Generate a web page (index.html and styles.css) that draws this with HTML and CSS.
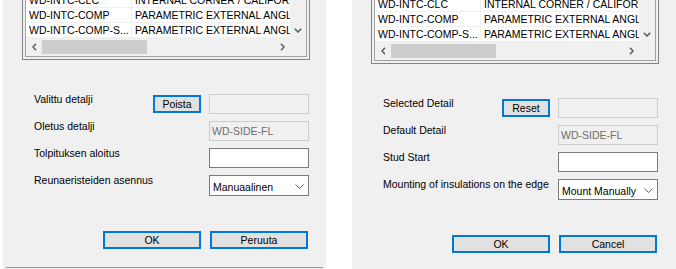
FILE: index.html
```html
<!DOCTYPE html>
<html lang="fi">
<head>
    <meta charset="UTF-8">
    <title>Detaljit</title>
    <link rel="stylesheet" href="styles.css">
</head>
<body>
    <!-- Finnish dialog -->
    <div class="dialog dialog-fi">
        <div class="list">
            <div class="list-inner">
                <div class="list-body">
                    <div class="rows">
                        <div class="row"><span class="col-name">WD-INTC-CLC</span><span class="col-desc">INTERNAL CORNER / CALIFORNIA</span></div>
                        <div class="row"><span class="col-name">WD-INTC-COMP</span><span class="col-desc">PARAMETRIC EXTERNAL ANGLE</span></div>
                        <div class="row"><span class="col-name">WD-INTC-COMP-S...</span><span class="col-desc">PARAMETRIC EXTERNAL ANGLE</span></div>
                    </div>
                    <div class="vscroll">
                        <div class="arrow">
                            <svg width="8" height="5" viewBox="0 0 8 5"><polyline points="0.8,0.8 4,4 7.2,0.8" /></svg>
                        </div>
                    </div>
                </div>
                <div class="hscroll">
                    <div class="arrow">
                        <svg width="5" height="8" viewBox="0 0 5 8"><polyline points="4,0.8 1,4 4,7.2" /></svg>
                    </div>
                    <div class="track"><div class="thumb"></div></div>
                    <div class="arrow">
                        <svg width="5" height="8" viewBox="0 0 5 8"><polyline points="1,0.8 4,4 1,7.2" /></svg>
                    </div>
                    <div class="corner"></div>
                </div>
            </div>
        </div>

        <div class="form">
            <div class="field">
                <span class="label">Valittu detalji</span>
                <button class="btn btn-small">Poista</button>
                <input class="text" type="text" disabled>
            </div>
            <div class="field">
                <span class="label">Oletus detalji</span>
                <input class="text" type="text" value="WD-SIDE-FL" disabled>
            </div>
            <div class="field">
                <span class="label">Tolpituksen aloitus</span>
                <input class="text" type="text">
            </div>
            <div class="field">
                <span class="label">Reunaeristeiden asennus</span>
                <div class="combo">
                    <span>Manuaalinen</span>
                    <svg width="9" height="5" viewBox="0 0 9 5"><polyline points="0.5,0.5 4.5,4.5 8.5,0.5" /></svg>
                </div>
            </div>
        </div>

        <div class="actions">
            <button class="btn">OK</button>
            <button class="btn">Peruuta</button>
        </div>
        <div class="foot-line"></div>
    </div>

    <!-- English dialog -->
    <div class="dialog dialog-en">
        <div class="list">
            <div class="list-inner">
                <div class="list-body">
                    <div class="rows">
                        <div class="row"><span class="col-name">WD-INTC-CLC</span><span class="col-desc">INTERNAL CORNER / CALIFORNIA</span></div>
                        <div class="row"><span class="col-name">WD-INTC-COMP</span><span class="col-desc">PARAMETRIC EXTERNAL ANGLE</span></div>
                        <div class="row"><span class="col-name">WD-INTC-COMP-S...</span><span class="col-desc">PARAMETRIC EXTERNAL ANGLE</span></div>
                    </div>
                    <div class="vscroll">
                        <div class="arrow">
                            <svg width="8" height="5" viewBox="0 0 8 5"><polyline points="0.8,0.8 4,4 7.2,0.8" /></svg>
                        </div>
                    </div>
                </div>
                <div class="hscroll">
                    <div class="arrow">
                        <svg width="5" height="8" viewBox="0 0 5 8"><polyline points="4,0.8 1,4 4,7.2" /></svg>
                    </div>
                    <div class="track"><div class="thumb"></div></div>
                    <div class="arrow">
                        <svg width="5" height="8" viewBox="0 0 5 8"><polyline points="1,0.8 4,4 1,7.2" /></svg>
                    </div>
                    <div class="corner"></div>
                </div>
            </div>
        </div>

        <div class="form">
            <div class="field">
                <span class="label">Selected Detail</span>
                <button class="btn btn-small">Reset</button>
                <input class="text" type="text" disabled>
            </div>
            <div class="field">
                <span class="label">Default Detail</span>
                <input class="text" type="text" value="WD-SIDE-FL" disabled>
            </div>
            <div class="field">
                <span class="label">Stud Start</span>
                <input class="text" type="text">
            </div>
            <div class="field">
                <span class="label">Mounting of insulations on the edge</span>
                <div class="combo">
                    <span>Mount Manually</span>
                    <svg width="9" height="5" viewBox="0 0 9 5"><polyline points="0.5,0.5 4.5,4.5 8.5,0.5" /></svg>
                </div>
            </div>
        </div>

        <div class="actions">
            <button class="btn">OK</button>
            <button class="btn">Cancel</button>
        </div>
        <div class="foot-line"></div>
    </div>
</body>
</html>
```

FILE: styles.css
```css
/* General */
body {
    margin: 0;
    height: 269px;
    overflow: hidden;
    display: flex;
    align-items: flex-start;
    background-color: #fff;
    font-family: "Liberation Sans", Arial, sans-serif;
    font-size: 10.5px;
    color: #000;
}

/* Dialog panels */
.dialog {
    width: 323px;
    display: flex;
    flex-direction: column;
    background-color: #f0f0f0;
}

.dialog-fi {
    margin-left: 3px;
    margin-top: -11px;
}

.dialog-en {
    width: 324px;
    margin-left: 26px;
    margin-top: -7px;
}

/* List view */
.list {
    width: 288px;
    margin-left: 19px;
    box-sizing: border-box;
    border: 1px solid #828282;
    padding: 2px;
}

.list-inner {
    border: 1px solid #a0a0a0;
    background-color: #fff;
}

.list-body {
    display: flex;
}

.rows {
    flex: 1;
    overflow: hidden;
}

.row {
    display: flex;
    height: 15px;
    box-sizing: border-box;
    border-bottom: 1px solid #f0f0f0;
    line-height: 14px;
    white-space: nowrap;
}

.col-name {
    flex: none;
    width: 106px;
    box-sizing: border-box;
    padding-left: 3px;
    border-right: 1px solid #f0f0f0;
    overflow: hidden;
}

.col-desc {
    padding-left: 3px;
}

.vscroll {
    width: 16px;
    display: flex;
    flex-direction: column;
    justify-content: flex-end;
    background-color: #f0f0f0;
}

.hscroll {
    display: flex;
    height: 18px;
    background-color: #f0f0f0;
}

.arrow {
    width: 16px;
    height: 16px;
    display: flex;
    align-items: center;
    justify-content: center;
}

.hscroll .arrow {
    height: 18px;
}

.arrow svg polyline {
    fill: none;
    stroke: #606060;
    stroke-width: 1.6;
}

.track {
    flex: 1;
}

.thumb {
    width: 105px;
    height: 14px;
    margin-top: 2px;
    background-color: #cdcdcd;
}

.corner {
    width: 16px;
}

/* Form rows */
.form {
    margin-top: 34px;
    margin-left: 31px;
    width: 275px;
    display: flex;
    flex-direction: column;
    gap: 7px;
}

.field {
    display: flex;
    align-items: flex-start;
}

.label {
    flex: 1;
    line-height: 11px;
    white-space: nowrap;
}

.text {
    width: 100px;
    height: 20px;
    box-sizing: border-box;
    margin: 0;
    padding: 0 2px;
    border: 1px solid #7a7a7a;
    background-color: #fff;
    font: inherit;
    color: #000;
}

.text:disabled {
    border-color: #cccccc;
    background-color: #f0f0f0;
    color: #6d6d6d;
}

.combo {
    width: 100px;
    height: 21px;
    box-sizing: border-box;
    padding: 2px 4px 0 3px;
    display: flex;
    align-items: center;
    justify-content: space-between;
    border: 1px solid #7a7a7a;
    background-color: #fff;
}

.combo svg polyline {
    fill: none;
    stroke: #606060;
    stroke-width: 1;
}

/* Buttons */
.btn {
    width: 98px;
    height: 18px;
    box-sizing: border-box;
    padding: 0;
    border: 2px solid #0078d7;
    background-color: #e1e1e1;
    font: inherit;
    color: #000;
}

.btn-small {
    width: 48px;
    margin: 1px 8px 0 0;
}

.actions {
    margin-top: 35px;
    margin-left: 100px;
    display: flex;
    gap: 9px;
}

.foot-line {
    height: 1px;
    margin: 18px 3px 1px;
    background-color: #999;
}
```
